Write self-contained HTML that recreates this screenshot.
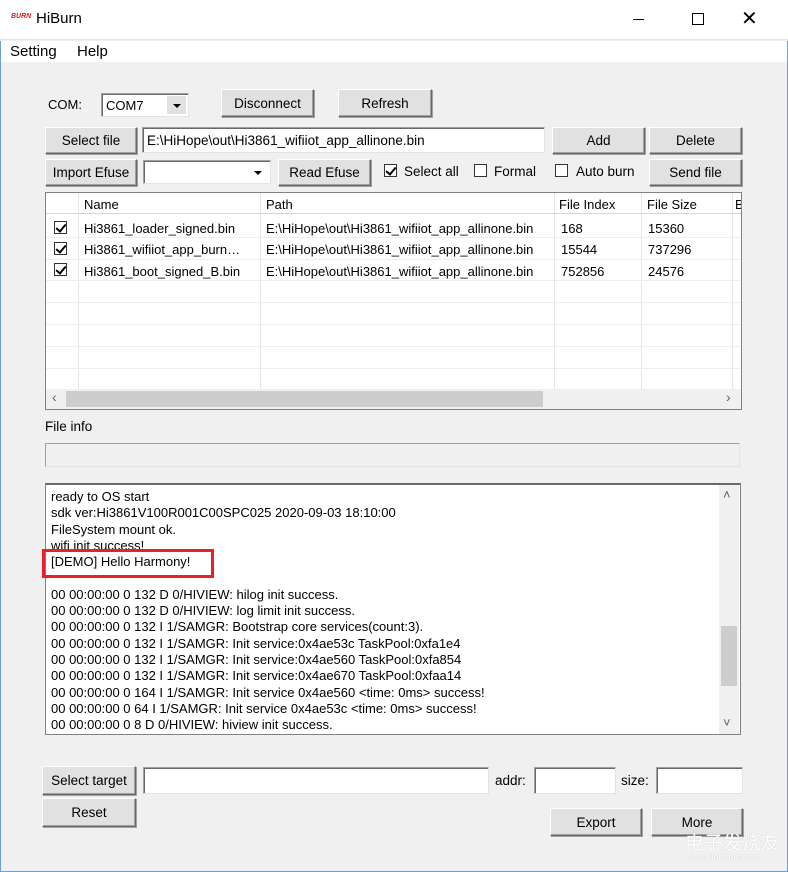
<!DOCTYPE html>
<html><head><meta charset="utf-8"><style>
*{box-sizing:border-box;margin:0;padding:0}
body{width:788px;height:872px;background:#f0f0f0;font-family:"Liberation Sans",sans-serif;font-size:13px;color:#000;position:relative;overflow:hidden}
.a{position:absolute;white-space:nowrap}
.btn{position:absolute;background:#e1e1e1;border:1px solid;border-color:#fff #696969 #696969 #fff;box-shadow:1px 1px 0 #a0a0a0,inset -1px -1px 0 #a0a0a0;display:flex;align-items:center;justify-content:center;font-size:13.5px}
.inp{position:absolute;background:#fff;border:1px solid;border-color:#a0a0a0 #e3e3e3 #e3e3e3 #a0a0a0;box-shadow:inset 1px 1px 0 #696969}
.cb{position:absolute;width:13px;height:13px;border:1px solid #333;background:#fff}
.chk::after{content:"";position:absolute;left:3px;top:0px;width:4px;height:8px;border:solid #000;border-width:0 2px 2px 0;transform:rotate(40deg)}
.arrow{position:absolute;width:0;height:0;border-left:4px solid transparent;border-right:4px solid transparent;border-top:4px solid #000}
.log div{height:16.3px;line-height:16px}
.t{font-size:13px}
</style></head><body>
<div class="a" style="left:0;top:0;width:788px;height:40px;background:#fff;border-bottom:1px solid #e5e5e5"></div>
<div class="a" style="left:11px;top:13px;color:#e02020;font-size:7px;font-style:italic;font-weight:bold">BURN</div>
<div class="a" style="left:36px;top:10px;font-size:15px">HiBurn</div>
<div class="a" style="left:633px;top:19px;width:11px;height:1px;background:#000"></div>
<div class="a" style="left:692px;top:13px;width:12px;height:12px;border:1px solid #000"></div>
<div class="a" style="left:741px;top:6px;font-size:20px;font-weight:200">✕</div>
<div class="a" style="left:0;top:41px;width:788px;height:21px;background:#fff"></div>
<div class="a" style="left:10px;top:43px;font-size:15px">Setting</div>
<div class="a" style="left:77px;top:43px;font-size:15px">Help</div>
<div class="a" style="left:0;top:41px;width:1px;height:831px;background:#6c9fd8"></div>
<div class="a" style="left:787px;top:41px;width:1px;height:831px;background:#6c9fd8"></div>

<div class="a" style="left:48px;top:97px">COM:</div>
<div class="inp" style="left:101px;top:93px;width:88px;height:24px"><span class="a" style="left:4px;top:4px">COM7</span><div class="a" style="left:65px;top:2px;width:19px;height:18px;background:#e1e1e1"></div><div class="arrow" style="left:71px;top:10px"></div></div>
<div class="btn" style="left:221px;top:89px;width:93px;height:28px">Disconnect</div>
<div class="btn" style="left:338px;top:89px;width:94px;height:28px">Refresh</div>

<div class="btn" style="left:45px;top:127px;width:92px;height:27px">Select file</div>
<div class="inp" style="left:142px;top:127px;width:403px;height:26px"><span class="a" style="left:4px;top:5px;font-size:13.5px">E:\HiHope\out\Hi3861_wifiiot_app_allinone.bin</span></div>
<div class="btn" style="left:552px;top:127px;width:93px;height:27px">Add</div>
<div class="btn" style="left:649px;top:127px;width:93px;height:27px">Delete</div>

<div class="btn" style="left:45px;top:159px;width:92px;height:27px">Import Efuse</div>
<div class="inp" style="left:143px;top:160px;width:128px;height:24px"><div class="arrow" style="left:110px;top:10px"></div></div>
<div class="btn" style="left:278px;top:159px;width:93px;height:27px">Read Efuse</div>
<div class="cb chk" style="left:384px;top:164px"></div><div class="a" style="left:404px;top:164px;font-size:13.5px">Select all</div>
<div class="cb" style="left:474px;top:164px"></div><div class="a" style="left:494px;top:164px;font-size:13.5px">Formal</div>
<div class="cb" style="left:555px;top:164px"></div><div class="a" style="left:576px;top:164px;font-size:13.5px">Auto burn</div>
<div class="btn" style="left:649px;top:159px;width:93px;height:27px">Send file</div>

<div class="a" style="left:45px;top:192px;width:697px;height:218px;background:#fff;border:1px solid #828282;overflow:hidden">
 <div class="a" style="left:0;top:0;width:700px;height:21px;background:#fff;border-bottom:1px solid #d5d5d5"></div>
 <div class="a t" style="left:38px;top:4px">Name</div>
 <div class="a t" style="left:220px;top:4px">Path</div>
 <div class="a t" style="left:513px;top:4px">File Index</div>
 <div class="a t" style="left:601px;top:4px">File Size</div>
 <div class="a t" style="left:689px;top:4px">B</div>
 <div class="a" style="left:32px;top:0;width:1px;height:196px;background:#e5e5e5"></div>
 <div class="a" style="left:214px;top:0;width:1px;height:196px;background:#e5e5e5"></div>
 <div class="a" style="left:508px;top:0;width:1px;height:196px;background:#e5e5e5"></div>
 <div class="a" style="left:595px;top:0;width:1px;height:196px;background:#e5e5e5"></div>
 <div class="a" style="left:686px;top:0;width:1px;height:196px;background:#e5e5e5"></div>
 <div class="a" style="left:0;top:44px;width:700px;height:1px;background:#eee"></div>
 <div class="a" style="left:0;top:66px;width:700px;height:1px;background:#eee"></div>
 <div class="a" style="left:0;top:87px;width:700px;height:1px;background:#eee"></div>
 <div class="a" style="left:0;top:109px;width:700px;height:1px;background:#eee"></div>
 <div class="a" style="left:0;top:131px;width:700px;height:1px;background:#eee"></div>
 <div class="a" style="left:0;top:153px;width:700px;height:1px;background:#eee"></div>
 <div class="a" style="left:0;top:175px;width:700px;height:1px;background:#eee"></div>
 <div class="cb chk" style="left:8px;top:28px"></div><div class="cb chk" style="left:8px;top:49px"></div><div class="cb chk" style="left:8px;top:70px"></div>
 <div class="a t" style="left:38px;top:28px">Hi3861_loader_signed.bin</div>
 <div class="a t" style="left:38px;top:49px">Hi3861_wifiiot_app_burn…</div>
 <div class="a t" style="left:38px;top:71px">Hi3861_boot_signed_B.bin</div>
 <div class="a t" style="left:220px;top:28px">E:\HiHope\out\Hi3861_wifiiot_app_allinone.bin</div>
 <div class="a t" style="left:220px;top:49px">E:\HiHope\out\Hi3861_wifiiot_app_allinone.bin</div>
 <div class="a t" style="left:220px;top:71px">E:\HiHope\out\Hi3861_wifiiot_app_allinone.bin</div>
 <div class="a t" style="left:515px;top:28px">168</div><div class="a t" style="left:515px;top:49px">15544</div><div class="a t" style="left:515px;top:71px">752856</div>
 <div class="a t" style="left:602px;top:28px">15360</div><div class="a t" style="left:602px;top:49px">737296</div><div class="a t" style="left:602px;top:71px">24576</div>
 <div class="a" style="left:0;top:196px;width:697px;height:20px;background:#f0f0f0"></div>
 <div class="a" style="left:20px;top:198px;width:477px;height:16px;background:#cdcdcd"></div>
 <div class="a" style="left:6px;top:196px;font-size:14px;color:#606060">‹</div>
 <div class="a" style="left:680px;top:196px;font-size:14px;color:#606060">›</div>
</div>

<div class="a" style="left:45px;top:419px;font-size:13.5px">File info</div>
<div class="a" style="left:45px;top:443px;width:695px;height:24px;background:#f0f0f0;border:1px solid #a0a0a0;border-right-color:#e3e3e3;border-bottom-color:#e3e3e3"></div>

<div class="a" style="left:45px;top:483px;width:696px;height:252px;background:#fff;border:1px solid #828282;border-top:2px solid #696969;overflow:hidden">
 <div class="log a" style="left:5px;top:4px;font-size:13px">
  <div>ready to OS start</div><div>sdk ver:Hi3861V100R001C00SPC025 2020-09-03 18:10:00</div><div>FileSystem mount ok.</div><div>wifi init success!</div><div>[DEMO] Hello Harmony!</div><div></div>
  <div>00 00:00:00 0 132 D 0/HIVIEW: hilog init success.</div>
  <div>00 00:00:00 0 132 D 0/HIVIEW: log limit init success.</div>
  <div>00 00:00:00 0 132 I 1/SAMGR: Bootstrap core services(count:3).</div>
  <div>00 00:00:00 0 132 I 1/SAMGR: Init service:0x4ae53c TaskPool:0xfa1e4</div>
  <div>00 00:00:00 0 132 I 1/SAMGR: Init service:0x4ae560 TaskPool:0xfa854</div>
  <div>00 00:00:00 0 132 I 1/SAMGR: Init service:0x4ae670 TaskPool:0xfaa14</div>
  <div>00 00:00:00 0 164 I 1/SAMGR: Init service 0x4ae560 &lt;time: 0ms&gt; success!</div>
  <div>00 00:00:00 0 64 I 1/SAMGR: Init service 0x4ae53c &lt;time: 0ms&gt; success!</div>
  <div>00 00:00:00 0 8 D 0/HIVIEW: hiview init success.</div>
 </div>
 <div class="a" style="left:673px;top:0;width:20px;height:250px;background:#f0f0f0"></div>
 <div class="a" style="left:675px;top:141px;width:16px;height:60px;background:#cdcdcd"></div>
 <div class="a" style="left:677px;top:2px;font-size:13px;color:#606060">˄</div>
 <div class="a" style="left:677px;top:230px;font-size:13px;color:#606060">˅</div>
</div>
<div class="a" style="left:42px;top:549px;width:172px;height:29px;border:3px solid #e8202a"></div>

<div class="btn" style="left:42px;top:766px;width:94px;height:29px">Select target</div>
<div class="inp" style="left:143px;top:767px;width:346px;height:27px"></div>
<div class="a" style="left:495px;top:773px;font-size:13.5px">addr:</div>
<div class="inp" style="left:534px;top:767px;width:82px;height:27px"></div>
<div class="a" style="left:621px;top:773px;font-size:13.5px">size:</div>
<div class="inp" style="left:656px;top:767px;width:87px;height:27px"></div>
<div class="btn" style="left:42px;top:798px;width:94px;height:29px">Reset</div>
<div class="btn" style="left:550px;top:808px;width:92px;height:28px">Export</div>
<div class="btn" style="left:651px;top:808px;width:92px;height:28px">More</div>
<div class="a" style="left:685px;top:828px;font-size:19px;color:#fff;font-family:'Noto Sans CJK SC',sans-serif;text-shadow:0 0 1px #bbb">电子发烧友</div>
<div class="a" style="left:685px;top:852px;font-size:9px;color:#fff;text-shadow:0 0 1px #bbb">www.elecfans.com</div>
<div class="a" style="left:0;top:871px;width:788px;height:1px;background:#6c9fd8"></div>
</body></html>
